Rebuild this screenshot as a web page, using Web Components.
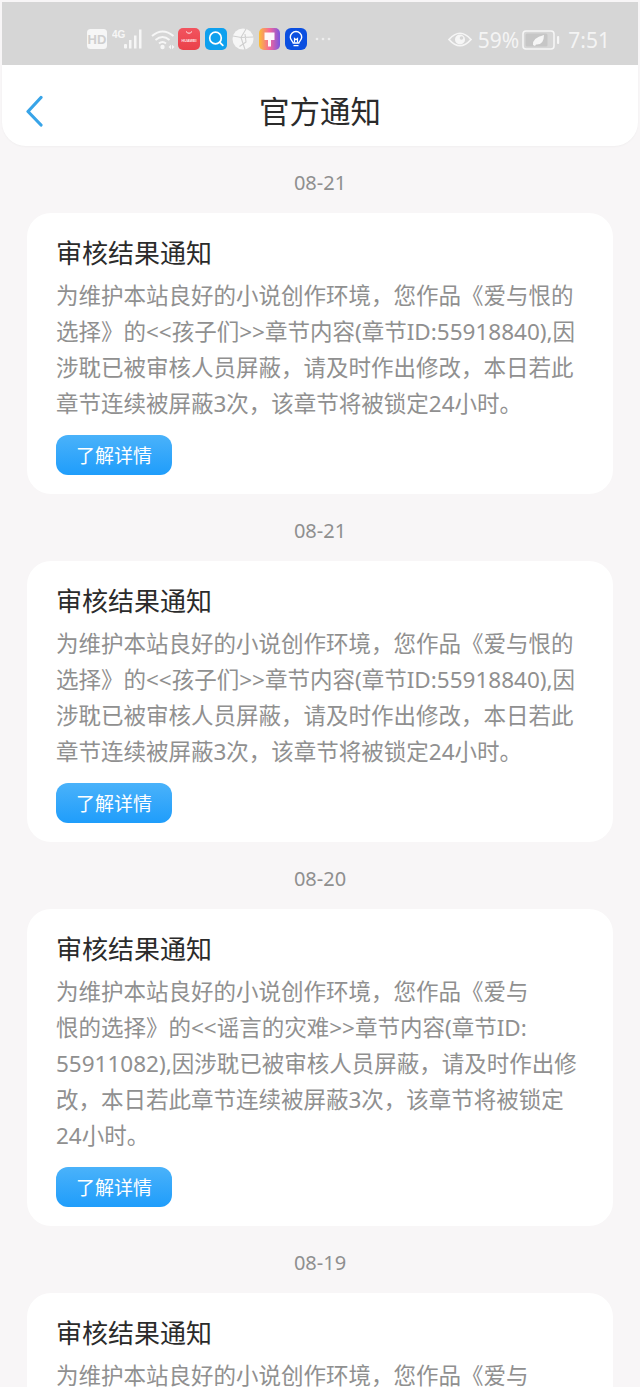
<!DOCTYPE html>
<html lang="zh">
<head>
<meta charset="utf-8">
<title>官方通知</title>
<style>
  html, body { margin: 0; padding: 0; }
  html { overflow: hidden; }
  body {
    width: 640px;
    height: 1387px;
    overflow: hidden;
    background: #f8f6f7;
    font-family: "Noto Sans CJK SC", "Noto Sans", sans-serif;
  }
</style>
</head>
<body>
<status-bar></status-bar>
<nav-header title="官方通知"></nav-header>

<notice-item date="08-21">为维护本站良好的小说创作环境，您作品《爱与恨的<br>选择》的&lt;&lt;孩子们&gt;&gt;章节内容(章节ID:55918840),因<br>涉耽已被审核人员屏蔽，请及时作出修改，本日若此<br>章节连续被屏蔽3次，该章节将被锁定24小时。</notice-item>
<notice-item date="08-21">为维护本站良好的小说创作环境，您作品《爱与恨的<br>选择》的&lt;&lt;孩子们&gt;&gt;章节内容(章节ID:55918840),因<br>涉耽已被审核人员屏蔽，请及时作出修改，本日若此<br>章节连续被屏蔽3次，该章节将被锁定24小时。</notice-item>
<notice-item date="08-20">为维护本站良好的小说创作环境，您作品《爱与<br>恨的选择》的&lt;&lt;谣言的灾难&gt;&gt;章节内容(章节ID:<br>55911082),因涉耽已被审核人员屏蔽，请及时作出修<br>改，本日若此章节连续被屏蔽3次，该章节将被锁定<br>24小时。</notice-item>
<notice-item date="08-19" cut>为维护本站良好的小说创作环境，您作品《爱与</notice-item>

<script>
class StatusBar extends HTMLElement {
  constructor() {
    super();
    const shadowRoot = this.attachShadow({ mode: 'open' });
    shadowRoot.innerHTML = `
      <style>
        :host {
          display: flex;
          box-sizing: border-box;
          height: 63px;
          margin: 2px 2px 0;
          padding: 26px 28px 0 85px;
          background: #d6d6d6;
          color: #f4f4f4;
          font-family: "Noto Sans", "Liberation Sans", sans-serif;
        }
        .left, .right { display: flex; align-items: flex-start; }
        .right { margin-left: auto; }
        svg { display: block; flex: none; }
        .text { font-size: 21px; line-height: 24px; }
      </style>
      <div class="left">
        <svg width="20" height="21" viewBox="0 0 20 21" style="margin-top:1px">
          <rect width="20" height="20" rx="3.500" fill="#f6f6f6"/>
          <text x="10" y="15" text-anchor="middle" font-family="Liberation Sans" font-weight="700" font-size="13" fill="#cfcfcf">HD</text>
        </svg>
        <svg width="33" height="22" viewBox="0 0 33 22" style="margin-left:5px;margin-top:1px">
          <text x="0" y="9" font-family="Liberation Sans" font-weight="700" font-size="10" fill="#f6f6f6">4G</text>
          <g fill="#f6f6f6">
            <rect x="12" y="15" width="3" height="4.500" rx="1"/>
            <rect x="17" y="11" width="2.500" height="8.500"/>
            <rect x="22" y="6.500" width="2.500" height="13"/>
            <rect x="27" y="0.500" width="2.500" height="19"/>
          </g>
        </svg>
        <svg width="24" height="22" viewBox="0 0 24 22" style="margin-left:6px;margin-top:1px">
          <path d="M1 7q10.500-9 21.500 0M4.500 11q7-6 14 0M8 14.500q3.500-3 7 0" fill="none" stroke="#f6f6f6" stroke-width="1.900"/>
          <circle cx="11.500" cy="18" r="2.200" fill="#f6f6f6"/>
          <path d="M17.500 18l2.500-2.200v4.400zM21 15.800l2.500 2.200-2.500 2.200z" fill="#f6f6f6"/>
        </svg>
        <svg width="22" height="22" viewBox="0 0 22 22" style="margin-left:3px">
          <defs><linearGradient id="hw" x1="0" y1="0" x2="0" y2="1"><stop offset="0" stop-color="#f2545f"/><stop offset="1" stop-color="#ea4049"/></linearGradient></defs>
          <rect width="22" height="22" rx="5" fill="url(#hw)"/>
          <path d="M8 3.500q3 3.500 6 0" fill="none" stroke="#fff" stroke-width=".9"/>
          <text x="11" y="13.500" text-anchor="middle" font-family="Liberation Sans" font-weight="700" font-size="3.800" fill="#fde3e5">HUAWEI</text>
        </svg>
        <svg width="22" height="22" viewBox="0 0 22 22" style="margin-left:5px">
          <rect width="22" height="22" rx="5" fill="#0ea0ee"/>
          <circle cx="10.500" cy="10" r="5.800" fill="none" stroke="#fff" stroke-width="1.700"/>
          <path d="M14.800 14.300l3 3" stroke="#fff" stroke-width="1.800" stroke-linecap="round"/>
        </svg>
        <svg width="22" height="22" viewBox="0 0 22 22" style="margin-left:5px">
          <circle cx="11" cy="11" r="10.500" fill="#f6f6f6"/>
          <path d="M14 1 9 9.500 1 8M9 9.500l4 12M9 9.500l12 -.5M13 6l1 8-6.500 4.500" fill="none" stroke="#cfcfcf" stroke-width="1.100"/>
        </svg>
        <svg width="21" height="22" viewBox="0 0 21 22" style="margin-left:5px">
          <defs><linearGradient id="pt" x1="0" y1="0" x2="1" y2="0"><stop offset="0" stop-color="#fbbf35"/><stop offset=".5" stop-color="#f5679a"/><stop offset="1" stop-color="#7b55e0"/></linearGradient></defs>
          <rect width="21" height="22" rx="5" fill="url(#pt)"/>
          <path d="M5.500 4.500h10v7.500h-3.500v6.500h-3v-6.500H5.500z" fill="#fff" opacity=".95"/>
        </svg>
        <svg width="22" height="22" viewBox="0 0 22 22" style="margin-left:5px">
          <rect width="22" height="22" rx="6" fill="#0b4fe0"/>
          <path d="M8.200 15c-.2-1.500-2.900-3-2.900-5.800a5.700 5.700 0 0 1 11.400 0c0 2.800-2.700 4.300-2.900 5.800z" fill="none" stroke="#fff" stroke-width="1.400"/>
          <path d="M8.500 17.700h5M9.500 14.500v-4l1.500 1.300 1.500-1.300v4" fill="none" stroke="#fff" stroke-width="1.200"/>
        </svg>
        <svg width="16" height="4" viewBox="0 0 16 4" style="margin-left:8px;margin-top:9px">
          <g fill="#eeeeee"><circle cx="2" cy="2" r="1.300"/><circle cx="8" cy="2" r="1.300"/><circle cx="14" cy="2" r="1.300"/></g>
        </svg>
      </div>
      <div class="right">
        <svg width="24" height="18" viewBox="0 0 24 18" style="margin-top:3px">
          <path d="M1 8.500q11-12.500 22 0q-11 12.500-22 0z" fill="none" stroke="#f6f6f6" stroke-width="1.700"/>
          <circle cx="12" cy="8.500" r="5" fill="#f6f6f6"/>
          <circle cx="13.500" cy="7" r="1.800" fill="#d6d6d6"/>
        </svg>
        <span class="text" style="margin-left:6px">59%</span>
        <svg width="38" height="21" viewBox="0 0 38 21" style="margin-left:3px;margin-top:2px">
          <rect x="1" y="1" width="31" height="18" rx="3" fill="none" stroke="#f6f6f6" stroke-width="1.600"/>
          <rect x="3.500" y="3.500" width="22" height="13" rx="1.500" fill="#c6c6c6"/>
          <rect x="35" y="6" width="2.200" height="8" rx="1" fill="#f6f6f6"/>
          <path d="M11 15q-1-7 11-10q0 10-8 9.500l-1 1.500z" fill="#f6f6f6"/>
        </svg>
        <span class="text" style="margin-left:8px">7:51</span>
      </div>
    `;
  }
}

class NavHeader extends HTMLElement {
  constructor() {
    super();
    const shadowRoot = this.attachShadow({ mode: 'open' });
    shadowRoot.innerHTML = `
      <style>
        :host {
          display: flex;
          align-items: center;
          justify-content: center;
          position: relative;
          box-sizing: border-box;
          height: 81px;
          margin: 0 2px 23px;
          padding-top: 8px;
          background: #fff;
          border-radius: 0 0 24px 24px;
          box-shadow: 0 1px 2px rgba(0, 0, 0, .03);
          color: #2b2b2b;
          font-size: 30.500px;
          line-height: 40px;
        }
        svg { position: absolute; left: 22px; top: 30px; }
      </style>
      <svg width="22" height="32" viewBox="0 0 22 32">
        <path d="M17 2.500 4 16.500 17 30" fill="none" stroke="#38a4e8" stroke-width="3.200" stroke-linecap="round" stroke-linejoin="round"/>
      </svg>
      <span id="title"></span>
    `;
    shadowRoot.getElementById('title').textContent = this.getAttribute('title');
  }
}

class NoticeItem extends HTMLElement {
  constructor() {
    super();
    const shadowRoot = this.attachShadow({ mode: 'open' });
    // the last card runs off the bottom of the screen, so no button for it
    const btn = this.hasAttribute('cut') ? '' : '<div class="btn">了解详情</div>';
    shadowRoot.innerHTML = `
      <style>
        :host { display: block; }
        .date {
          height: 28px;
          margin-bottom: 16px;
          text-align: center;
          font-size: 20px;
          line-height: 28px;
          color: #8f8f8f;
          font-family: "Noto Sans", sans-serif;
        }
        .card {
          box-sizing: border-box;
          margin: 0 27px 23px;
          padding: 19px 30px 19px 29px;
          background: #fff;
          border-radius: 24px;
        }
        .title {
          height: 40px;
          font-size: 26px;
          line-height: 40px;
          color: #2b2b2b;
        }
        .body {
          margin-top: 6px;
          font-family: "Noto Sans", "Noto Sans CJK SC", sans-serif;
          font-size: 22.500px;
          line-height: 36px;
          color: #909090;
          white-space: nowrap;
        }
        .btn {
          display: flex;
          align-items: center;
          justify-content: center;
          box-sizing: border-box;
          width: 116px;
          height: 40px;
          margin-top: 13px;
          padding-bottom: 2px;
          border-radius: 12px;
          background: linear-gradient(#4ab2fa, #1f9dfb);
          color: #fff;
          font-size: 19px;
        }
      </style>
      <div class="date" id="date"></div>
      <div class="card">
        <div class="title">审核结果通知</div>
        <div class="body"><slot></slot></div>
        ${btn}
      </div>
    `;
    shadowRoot.getElementById('date').textContent = this.getAttribute('date');
  }
}

customElements.define('status-bar', StatusBar);
customElements.define('nav-header', NavHeader);
customElements.define('notice-item', NoticeItem);
</script>
</body>
</html>
